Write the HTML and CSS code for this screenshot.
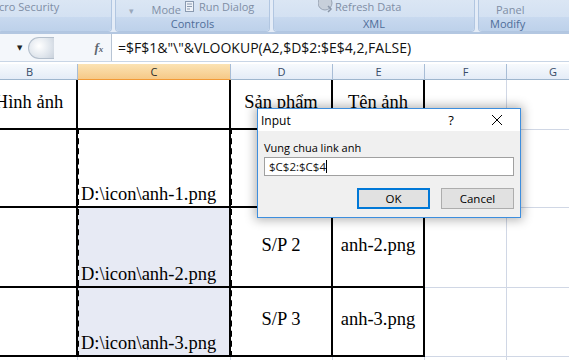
FILE: index.html
```html
<!DOCTYPE html>
<html lang="en">
<head>
    <meta charset="UTF-8">
    <meta name="viewport" content="width=device-width, initial-scale=1.0">
    <title>Input</title>
    <link rel="stylesheet" href="styles.css">
</head>
<body>
    <div class="ribbon">
        <div class="group g1">
            <div class="items"><span class="dim sec">Macro Security</span></div>
            <div class="label"><span class="code">Code</span></div>
        </div>
        <div class="group g2">
            <div class="items">
                <span class="drop">&#9662;</span>
                <span class="dim mode">Mode</span>
                <svg class="ico" width="9" height="11" viewBox="0 0 9 11">
                    <rect x="0.5" y="0.5" width="8" height="10" fill="#eef2f8" stroke="#8a9ab0"/>
                    <line x1="2" y1="3" x2="7" y2="3" stroke="#8a9ab0"/>
                    <line x1="2" y1="5.5" x2="7" y2="5.5" stroke="#8a9ab0"/>
                    <line x1="2" y1="8" x2="5" y2="8" stroke="#8a9ab0"/>
                </svg>
                <span class="dim">Run Dialog</span>
            </div>
            <div class="label">Controls</div>
        </div>
        <div class="group g3">
            <div class="items">
                <svg class="globe" width="16" height="13" viewBox="0 0 16 13">
                    <circle cx="7" cy="3" r="7" fill="#c7cfda" stroke="#98a3b3"/>
                    <path d="M10 6 L13 9 L10 12" fill="none" stroke="#8a96a8" stroke-width="1.5"/>
                </svg>
                <span class="dim">Refresh Data</span>
            </div>
            <div class="label">XML</div>
        </div>
        <div class="group g4">
            <div class="items"><span class="dim panel">Panel</span></div>
            <div class="label left">Modify</div>
        </div>
    </div>

    <div class="fbar">
        <div class="namebox">
            <span class="nbarrow">&#9660;</span>
            <span class="grip"></span>
            <span class="fx">f<small>x</small></span>
        </div>
        <div class="formula">=$F$1&amp;"\"&amp;VLOOKUP(A2,$D$2:$E$4,2,FALSE)</div>
    </div>

    <div class="sheet">
        <div class="hd">B</div>
        <div class="hd on">C</div>
        <div class="hd">D</div>
        <div class="hd">E</div>
        <div class="hd">F</div>
        <div class="hd">G</div>

        <div class="c bk mid">Hình ảnh</div>
        <div class="c bk"></div>
        <div class="c bk mid">Sản phẩm</div>
        <div class="c bk mid">Tên ảnh</div>
        <div class="c"></div>
        <div class="c"></div>

        <div class="c bk"></div>
        <div class="c bk low">D:\icon\anh-1.png</div>
        <div class="c bk mid">S/P 1</div>
        <div class="c bk mid">anh-1.png</div>
        <div class="c"></div>
        <div class="c"></div>

        <div class="c bk"></div>
        <div class="c bk low sel">D:\icon\anh-2.png</div>
        <div class="c bk mid">S/P 2</div>
        <div class="c bk mid">anh-2.png</div>
        <div class="c"></div>
        <div class="c"></div>

        <div class="c bk"></div>
        <div class="c bk low sel">D:\icon\anh-3.png</div>
        <div class="c bk mid">S/P 3</div>
        <div class="c bk mid">anh-3.png</div>
        <div class="c"></div>
        <div class="c"></div>

        <div class="c"></div>
        <div class="c"></div>
        <div class="c"></div>
        <div class="c"></div>
        <div class="c"></div>
        <div class="c"></div>

        <div class="marquee"></div>
    </div>

    <div class="dialog">
        <div class="title">
            <span class="tname">Input</span>
            <span class="tbtn">?</span>
            <span class="tbtn">
                <svg width="12" height="12" viewBox="0 0 12 12">
                    <path d="M1 1 L11 11 M11 1 L1 11" stroke="#000" stroke-width="1"/>
                </svg>
            </span>
        </div>
        <div class="dbody">
            <div class="prompt">Vung chua link anh</div>
            <div class="field">$C$2:$C$4<span class="caret"></span></div>
            <div class="buttons">
                <button class="btn ok" type="button">OK</button>
                <button class="btn" type="button">Cancel</button>
            </div>
        </div>
    </div>
</body>
</html>
```

FILE: styles.css
```css
*{
    box-sizing: border-box;
    margin: 0;
}
body{
    width: 569px;
    height: 360px;
    overflow: hidden;
    position: relative;
    background-color: #fff;
    font-family: "Open Sans", "DejaVu Sans", sans-serif;
}

/* ribbon */
.ribbon{
    display: flex;
    gap: 3px;
    height: 34px;
    background: #e4ecf7;
    border-bottom: 2px solid #b3c7e1;
    overflow: hidden;
}
.group{
    display: flex;
    flex-direction: column;
    flex-shrink: 0;
    height: 32px;
    border: 1px solid #b1c6e1;
    border-top: none;
    border-radius: 0 0 4px 4px;
    overflow: hidden;
}
.g1{ width: 114px; margin-left: -2px; }
.g2{ width: 155px; }
.g3{ width: 202px; }
.g4{ width: 120px; }
.items{
    height: 17px;
    display: flex;
    align-items: flex-start;
    background: linear-gradient(#dbe6f4, #d3e1f2);
    font-size: 11px;
    line-height: 13px;
    white-space: nowrap;
}
.dim{ color: #7f8ea5; }
.sec{ margin-left: -16px; }
.drop{
    color: #9aa8bb;
    font-size: 9px;
    margin: 4px 0 0 13px;
}
.mode{
    margin: 3px 0 0 18px;
}
.ico{
    margin: 1px 5px 0 4px;
}
.globe{
    margin: 0 1px 0 44px;
}
.panel{ margin: 3px 0 0 17px; }
.label{
    flex: 1;
    background: linear-gradient(#c8d9ef, #bdd1ea);
    color: #4e6d99;
    font-size: 11px;
    line-height: 14px;
    text-align: center;
    white-space: nowrap;
}
.label.left{
    text-align: left;
    padding-left: 11px;
}
.code{
    display: inline-block;
    margin-left: -44px;
}
.g1 .label{ text-align: left; }

/* formula bar */
.fbar{
    display: flex;
    height: 28px;
    background: #f4f7fb;
    border-bottom: 1px solid #c9d6e6;
}
.namebox{
    width: 111px;
    display: flex;
    align-items: center;
    flex-shrink: 0;
}
.nbarrow{
    font-size: 7px;
    color: #222;
    margin-left: 17px;
}
.grip{
    width: 26px;
    height: 22px;
    margin-left: 6px;
    border: 1px solid #b4bfcc;
    border-right: none;
    border-radius: 13px 0 0 13px;
    background: radial-gradient(circle at 40% 40%, #fff 0, #dfe5ec 60%, #c9d1db 100%);
}
.fx{
    margin-left: 40px;
    font-family: "Liberation Serif", serif;
    font-style: italic;
    font-weight: bold;
    color: #5d6670;
    font-size: 13px;
}
.fx small{ font-size: 9px; }
.formula{
    flex: 1;
    background: #fff;
    border-left: 1px solid #b7c4d4;
    padding-left: 6px;
    font-size: 14px;
    line-height: 27px;
    color: #111;
    white-space: nowrap;
}

/* sheet */
.sheet{
    display: grid;
    grid-template-columns: 96px 153px 102px 92px 82px 93px;
    grid-template-rows: 16px 50px 78px 80px 69px 20px;
    margin: 2px 0 0 -18px;
    position: relative;
}
.hd{
    background: linear-gradient(#f7fafd, #e4ecf7);
    border-right: 1px solid #a8bdd6;
    border-bottom: 1px solid #9eb6ce;
    font-size: 11px;
    line-height: 15px;
    color: #364b68;
    text-align: center;
}
.hd.on{
    background: linear-gradient(#fbe3b4, #f6c987);
    border-bottom: 1px solid #f29a36;
    color: #2a2a2a;
}
.c{
    border-right: 1px solid #d0d7e5;
    border-bottom: 1px solid #d0d7e5;
    font-family: "Liberation Serif", "Times New Roman", serif;
    font-size: 18.5px;
    color: #000;
    white-space: nowrap;
    overflow: hidden;
}
.c.bk{
    border-right: 2px solid #000;
    border-bottom: 2px solid #000;
}
.mid{
    display: flex;
    align-items: center;
    justify-content: center;
    padding-bottom: 4px;
}
.low{
    display: flex;
    align-items: flex-end;
    padding: 0 0 1px 3px;
}
.sel{
    background-color: #e7eaf4;
}
.marquee{
    position: absolute;
    left: 95px;
    top: 64px;
    width: 155px;
    height: 229px;
    border: 2px dashed #000;
    pointer-events: none;
}

/* dialog */
.dialog{
    position: absolute;
    left: 257px;
    top: 108px;
    width: 264px;
    height: 110px;
    border: 1px solid #3d8ede;
    background: #f0f0f0;
    box-shadow: 0 0 10px 2px rgba(0, 0, 0, 0.3);
}
.title{
    height: 22px;
    display: flex;
    align-items: center;
    background: #fff;
    font-size: 12px;
}
.tname{
    flex: 1;
    padding-left: 3px;
}
.tbtn{
    width: 46px;
    text-align: center;
    font-size: 13px;
    display: flex;
    justify-content: center;
}
.dbody{
    padding: 10px 6px 0 6px;
}
.prompt{
    font-size: 11px;
    line-height: 14px;
    color: #000;
}
.field{
    margin-top: 2px;
    height: 19px;
    background: #fff;
    border: 1px solid #a0a0a0;
    font-size: 11.5px;
    line-height: 17px;
    padding-left: 4px;
    color: #111;
}
.caret{
    display: inline-block;
    width: 1px;
    height: 13px;
    background: #000;
    vertical-align: -2px;
}
.buttons{
    display: flex;
    justify-content: flex-end;
    gap: 11px;
    margin-top: 12px;
}
.btn{
    width: 73px;
    height: 21px;
    border: 1px solid #adadad;
    background: #e1e1e1;
    font-family: "Open Sans", sans-serif;
    font-size: 11.5px;
    color: #000;
    padding: 0;
}
.btn.ok{
    border: 2px solid #0078d7;
}
```
